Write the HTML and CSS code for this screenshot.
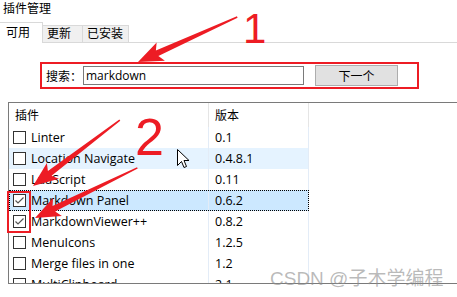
FILE: index.html
```html
<!DOCTYPE html>
<html lang="zh-CN">
<head>
    <meta charset="UTF-8">
    <title>插件管理</title>
    <link rel="stylesheet" href="styles.css">
</head>
<body>
    <div class="window">
        <div class="title">插件管理</div>

        <div class="tabs">
            <div class="tab active">可用</div>
            <div class="tab">更新</div>
            <div class="tab tab-wide">已安装</div>
        </div>

        <div class="search-bar">
            <span class="search-label">搜索：</span>
            <input class="search-input" type="text" value="markdown">
            <button class="next-button">下一个</button>
        </div>

        <div class="plugin-list">
            <div class="row header">
                <div class="name">插件</div>
                <div class="ver">版本</div>
            </div>
            <div class="row">
                <div class="name"><span class="box"></span>Linter</div>
                <div class="ver">0.1</div>
            </div>
            <div class="row hover">
                <div class="name"><span class="box"></span>Location Navigate</div>
                <div class="ver">0.4.8.1</div>
            </div>
            <div class="row">
                <div class="name"><span class="box"></span>LuaScript</div>
                <div class="ver">0.11</div>
            </div>
            <div class="row selected">
                <div class="name"><span class="box checked"><svg width="11" height="11"><polyline points="1.5,5.5 4,8 9.5,2.5"/></svg></span>Markdown Panel</div>
                <div class="ver">0.6.2</div>
            </div>
            <div class="row">
                <div class="name"><span class="box checked"><svg width="11" height="11"><polyline points="1.5,5.5 4,8 9.5,2.5"/></svg></span>MarkdownViewer++</div>
                <div class="ver">0.8.2</div>
            </div>
            <div class="row">
                <div class="name"><span class="box"></span>MenuIcons</div>
                <div class="ver">1.2.5</div>
            </div>
            <div class="row">
                <div class="name"><span class="box"></span>Merge files in one</div>
                <div class="ver">1.2</div>
            </div>
            <div class="row">
                <div class="name"><span class="box"></span>MultiClipboard</div>
                <div class="ver">2.1</div>
            </div>
        </div>
    </div>

    <!-- red annotations drawn over the screenshot -->
    <svg class="marks" width="457" height="297">
        <g class="arrow" transform="translate(138 62) rotate(-24.4)">
            <polygon points="0,0 25,-10 21,-3 109,-0.8 109,0.8 21,3 25,10"/>
        </g>
        <g class="arrow" transform="translate(33 186) rotate(-37.2)">
            <polygon points="0,0 25,-10 21,-3 109,-0.8 109,0.8 21,3 25,10"/>
        </g>
        <g class="arrow" transform="translate(35 218) rotate(-26.1)">
            <polygon points="0,0 25,-10 21,-3 114,-0.8 114,0.8 21,3 25,10"/>
        </g>
        <rect class="mark-box" x="8" y="192" width="22" height="40"/>
        <text class="mark-num" x="243" y="43" font-size="42">1</text>
        <text class="mark-num" x="135" y="155" font-size="52">2</text>
        <path class="cursor" d="M177.5,149.5 L177.5,165.5 L181.5,161.5 L184,167.5 L186.5,166.5 L184,160.5 L189,160.5 Z"/>
    </svg>

    <div class="watermark">CSDN @子木学编程</div>
</body>
</html>
```

FILE: styles.css
```css
body {
    margin: 0;
    width: 457px;
    height: 297px;
    overflow: hidden;
    position: relative;
    background: #fff;
    font-family: 'Open Sans', 'Noto Sans CJK SC', sans-serif;
    font-size: 12px;
    color: #000;
}

.title {
    height: 22px;
    line-height: 18px;
    padding-left: 3px;
    box-sizing: border-box;
}

.tabs {
    display: flex;
    align-items: flex-end;
    height: 20px;
    border-bottom: 1px solid #d9d9d9;
}

.tab {
    height: 17px;
    width: 40px;
    box-sizing: border-box;
    padding-left: 4px;
    line-height: 16px;
    background: #f0f0f0;
    border-top: 1px solid #d9d9d9;
    border-right: 1px solid #d9d9d9;
}

.tab.active {
    height: 21px;
    width: 43px;
    margin-bottom: -1px;
    padding-left: 6px;
    line-height: 19px;
    background: #fff;
}

.tab-wide {
    width: 46px;
}

.search-bar {
    display: flex;
    align-items: center;
    width: 379px;
    height: 27px;
    box-sizing: border-box;
    margin: 19px 0 0 40px;
    padding-left: 4px;
    border: 2px solid #ed1c24;
}

.search-label {
    width: 37px;
}

.search-input {
    width: 221px;
    height: 19px;
    box-sizing: border-box;
    margin: 0;
    padding: 0 2px;
    border: 1px solid #7a7a7a;
    font: inherit;
    outline: none;
}

.next-button {
    width: 83px;
    height: 21px;
    margin: 0 0 0 11px;
    padding: 0;
    background: #e1e1e1;
    border: 1px solid #adadad;
    font: inherit;
    color: #000;
}

.plugin-list {
    width: 449px;
    height: 182px;
    box-sizing: border-box;
    margin: 13px 0 0 8px;
    border: 1px solid #7a7a7a;
    border-right: none;
    overflow: hidden;
    font-size: 12.5px;
}

.row {
    display: flex;
    width: 300px;
    height: 21px;
    align-items: stretch;
}

.name,
.ver {
    display: flex;
    align-items: center;
    box-sizing: border-box;
    white-space: nowrap;
    border-right: 1px solid #e3ecf7;
}

.name {
    width: 200px;
    padding-left: 4px;
}

.ver {
    width: 100px;
    padding-left: 6px;
}

.row.header {
    height: 24px;
    font-size: 12px;
}

.row.header .name,
.row.header .ver {
    border-right-color: #e5e5e5;
    padding-left: 6px;
}

.row.hover {
    background: #e5f3ff;
}

.row.selected {
    background: #cce8ff;
    outline: 1px dotted #000;
    outline-offset: -1px;
}

.box {
    width: 13px;
    height: 13px;
    box-sizing: border-box;
    margin-right: 5px;
    border: 1px solid #333;
    background: #fff;
    flex-shrink: 0;
}

.box svg {
    display: block;
}

.box polyline {
    fill: none;
    stroke: #555;
    stroke-width: 1.2;
}

.marks {
    position: absolute;
    left: 0;
    top: 0;
    pointer-events: none;
}

.arrow polygon {
    fill: #ed1c24;
}

.mark-box {
    fill: none;
    stroke: #ed1c24;
    stroke-width: 2;
}

.mark-num {
    fill: #ed1c24;
    font-family: 'Liberation Sans', sans-serif;
}

.cursor {
    fill: #fff;
    stroke: #000;
    stroke-width: 1;
}

.watermark {
    position: absolute;
    left: 270px;
    top: 268px;
    font-family: 'Liberation Sans', 'Noto Sans CJK SC', sans-serif;
    font-size: 19px;
    line-height: 22px;
    color: rgba(140, 140, 140, 0.6);
    white-space: nowrap;
}
```
